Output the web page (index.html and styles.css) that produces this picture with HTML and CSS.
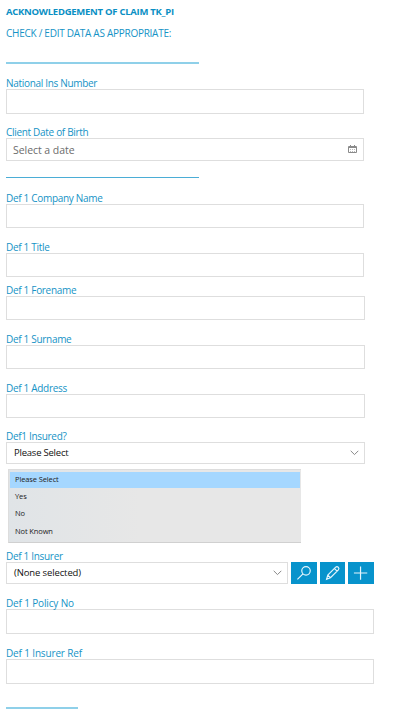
FILE: index.html
```html
<!DOCTYPE html>
<html lang="en">
<head>
<meta charset="utf-8">
<title>Acknowledgement of Claim</title>
<link rel="stylesheet" href="styles.css">
</head>
<body>
<form class="form">
  <h1 class="title">ACKNOWLEDGEMENT OF CLAIM TK_PI</h1>
  <p class="subtitle">CHECK / EDIT DATA AS APPROPRIATE:</p>
  <div class="rule rule-soft"></div>
  <div class="field nin"><label class="label">National Ins Number</label><div class="box"></div></div>
  <div class="field dob"><label class="label">Client Date of Birth</label>
    <div class="box"><span class="placeholder">Select a date</span>
      <svg class="calendar" viewBox="0 0 9 9"><path d="M.5 1.5h8v6h-8zM.5 2.5h8M2.5 0v2M6.5 0v2" fill="none" stroke="#8a8a8a"/><path d="M2 4.5h5M2 6.5h5" stroke="#bbb" stroke-dasharray="1 1"/></svg>
    </div>
  </div>
  <div class="rule"></div>
  <div class="field company"><label class="label">Def 1 Company Name</label><div class="box"></div></div>
  <div class="field"><label class="label">Def 1 Title</label><div class="box"></div></div>
  <div class="field wide forename"><label class="label">Def 1 Forename</label><div class="box"></div></div>
  <div class="field wide"><label class="label">Def 1 Surname</label><div class="box"></div></div>
  <div class="field wide"><label class="label">Def 1 Address</label><div class="box"></div></div>
  <div class="field wide insured"><label class="label">Def1 Insured?</label>
    <div class="box"><span class="value">Please Select</span>
      <svg class="chevron" viewBox="0 0 9 6"><path d="M.7.8 4.5 4.6 8.3.8" fill="none" stroke="#888"/></svg>
    </div>
  </div>
  <ul class="options">
    <li class="option selected">Please Select</li>
    <li class="option">Yes</li>
    <li class="option">No</li>
    <li class="option">Not Known</li>
  </ul>
  <div class="field insurer"><label class="label">Def 1 Insurer</label>
    <div class="row">
      <div class="box"><span class="value">(None selected)</span>
        <svg class="chevron" viewBox="0 0 9 6"><path d="M.7.8 4.5 4.6 8.3.8" fill="none" stroke="#888"/></svg>
      </div>
      <button type="button" class="action" aria-label="Search"><svg viewBox="0 0 26 22"><circle cx="15.2" cy="8.8" r="4.3"/><path d="M12.1 11.9 6.5 17.5"/></svg></button>
      <button type="button" class="action" aria-label="Edit"><svg viewBox="0 0 26 22"><path d="m6.7 17.3 1.2-4.2 8-8q1.3-1.1 2.6.1t.1 2.6l-8 8zM14.5 6.3l2.8 2.8M7.9 13.1l2.7 2.7"/></svg></button>
      <button type="button" class="action" aria-label="Add"><svg viewBox="0 0 26 22"><path d="M6 11h13.5M12.7 4.3v13.5"/></svg></button>
    </div>
  </div>
  <div class="field full"><label class="label tail">Def 1 Policy No</label><div class="box"></div></div>
  <div class="field full"><label class="label tail">Def 1 Insurer Ref</label><div class="box"></div></div>
  <div class="rule rule-soft rule-short"></div>
</form>
</body>
</html>
```
FILE: styles.css
```css
* { box-sizing: border-box; }
body { margin: 0; background: #fff; font-family: "Open Sans", "Noto Sans", sans-serif; }
.form { width: 404px; height: 717px; padding: 5px 0 0 6px; overflow: hidden; }
.title { margin: 0; font-size: 9.5px; line-height: 14px; font-weight: 700; letter-spacing: -.27px; color: #0a8fc4; white-space: nowrap; }
.subtitle { margin: 7px 0 0; font-size: 10px; line-height: 14px; letter-spacing: -.27px; color: #1593c6; white-space: nowrap; }
.rule { width: 193px; height: 1px; margin-top: 16px; background: #4badd6; }
.rule-soft { height: 2px; margin-top: 22px; background: #8fd0e9; }
.rule-short { width: 72px; margin-top: 23px; }
.field { width: 358px; margin-top: 11px; }
.label { display: block; height: 14px; font-size: 10px; line-height: 16px; letter-spacing: -.31px; color: #1593c6; white-space: nowrap; }
.tail { letter-spacing: -.15px; }
.box { display: flex; align-items: center; justify-content: space-between; height: 24px; border: 1px solid #dedede; background: #fff; }
.nin .box { height: 25px; }
.dob { margin-top: 10px; }
.dob .box { height: 23px; padding: 0 6px; }
.placeholder { font-size: 10.5px; line-height: 14px; letter-spacing: -.05px; color: #6c6c6c; }
.calendar { width: 9px; height: 9px; }
.company { margin-top: 12px; }
.wide { width: 359px; }
.forename { margin-top: 5px; }
.insured { margin-top: 10px; }
.insured .box { height: 22px; padding: 0 5px 0 7px; }
.value { font-size: 9.5px; line-height: 14px; letter-spacing: -.22px; color: #111; }
.row .value { letter-spacing: -.12px; }
.chevron { width: 9px; height: 6px; }
.options { width: 293px; height: 74px; margin: 5px 0 0 2px; padding: 2px 1px 0; list-style: none; background: linear-gradient(90deg, #e0e4e7, #e7e7e7 45%); border-top: 1px solid #ddd; border-bottom: 1px solid #d0d0d0; border-left: 1px solid #ddd; }
.option { height: 17.3px; padding-left: 5px; font-size: 7.5px; line-height: 17px; letter-spacing: -.12px; color: #222; }
.selected { height: 16px; line-height: 14px; background: #a5d7ff; }
.insurer { width: 368px; margin-top: 5px; }
.row { display: flex; gap: 3px; }
.row .box { width: 282px; height: 22px; padding: 0 5px 0 7px; }
.action { flex: 1; height: 22px; padding: 0; border: 0; background: #0793cc; }
.action svg { display: block; width: 100%; height: 22px; fill: none; stroke: #e5f5fc; stroke-width: 1.2; }
.full { width: 368px; }
.full .box { height: 25px; }
```
